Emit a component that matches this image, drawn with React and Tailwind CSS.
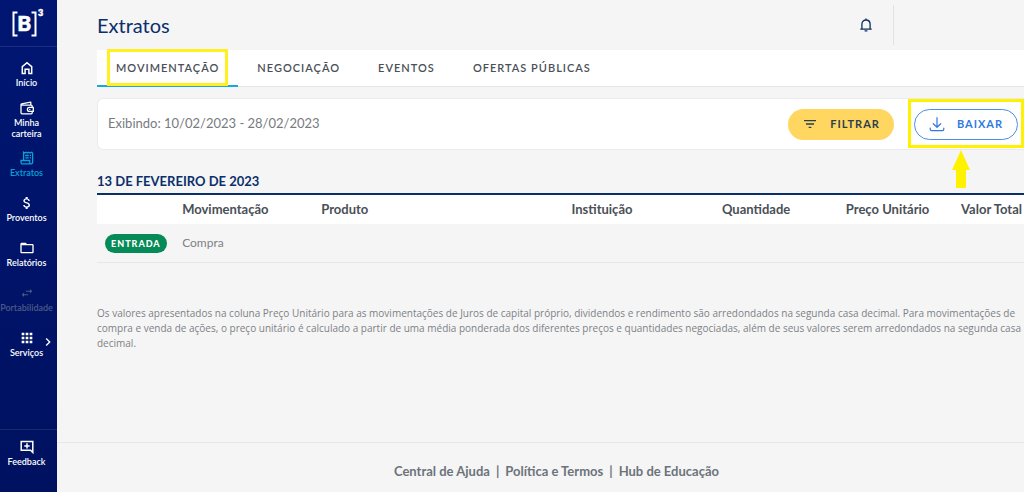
import { useState } from 'react'
import { MdApps, MdAttachMoney, MdFilterList, MdSwapHoriz, MdFolderOpen, MdChevronRight } from 'react-icons/md'

const HomeIcon = () => (
  <svg viewBox="0 0 14 14" className="size-[14px]" fill="none" stroke="currentColor" strokeWidth="1.5">
    <path d="M2.3 12.5V5.6L7 1.7l4.7 3.9v6.9H8.9V8.3H5.1v4.2z" />
  </svg>
)

const WalletIcon = () => (
  <svg viewBox="0 0 14 14" className="size-[14px]" fill="none" stroke="currentColor" strokeWidth="1.3" strokeLinejoin="round" strokeLinecap="round">
    <path d="M1 4.4v7.4c0 .6.4 1 1 1h9.2c.6 0 1-.4 1-1v-1.4M12.2 6.4V5.2c0-.6-.4-1-1-1H1.6c-.8 0-.8-1.2 0-1.4L10.8 1.2v3" />
    <path d="M13.3 6.4H9.4a2 2 0 0 0 0 4h3.9z" />
    <path d="M9.7 8.4h.1" />
  </svg>
)

const ReceiptIcon = () => (
  <svg viewBox="0 0 14 14" className="size-[14px]" fill="none" stroke="currentColor" strokeWidth="1.3">
    <path d="M3.6 9.4V1.2l1.3.8 1.3-.8 1.3.8 1.3-.8 1.3.8 1.3-.8 1.2.8v9.2c0 1-.6 1.7-1.5 1.7H2.5c-.9 0-1.5-.7-1.5-1.6V9.5h8.7v1.7c0 1 .6 1.7 1.4 1.7" />
    <path d="M5.2 4.5h3.6M5.2 6.9h3.6M9.8 4.5H11M9.8 6.9H11" />
  </svg>
)

const FeedbackIcon = () => (
  <svg viewBox="0 0 14 14" className="size-[14px]" fill="none" stroke="currentColor" strokeWidth="1.5">
    <path d="M1.2 1.5h11.6v11l-2.2-2.2H1.2zM7 3.2v5.4M4.3 5.9h5.4" />
  </svg>
)

const BellIcon = () => (
  <svg viewBox="0 0 14 14" className="size-[14px]" fill="none" stroke="currentColor" strokeWidth="1.3">
    <path d="M1.3 11.2h11.4M2.9 11.2V6.3C2.9 3.8 4.6 2 7 2s4.1 1.8 4.1 4.3v4.9M7 .4V2M5.6 12.9h2.8" />
  </svg>
)

const DownloadIcon = () => (
  <svg viewBox="0 0 16 16" className="size-4" fill="none" stroke="currentColor" strokeWidth="1.2" strokeLinecap="round" strokeLinejoin="round">
    <path d="M8 1.5v9.7M4.3 7.7 8 11.3l3.7-3.6M1.2 12v1.3c0 .9.5 1.4 1.4 1.4h10.8c.9 0 1.4-.5 1.4-1.4V12" />
  </svg>
)

const Logo = () => (
  <svg viewBox="0 0 34 30" className="h-[30px] w-[34px] text-white" role="img" aria-label="B3">
    <path d="M7.5 4.5H3.5v23h4M21.5 4.5h4v23h-4" fill="none" stroke="currentColor" strokeWidth="2" />
    <text x="7.3" y="23" fontSize="21" fontWeight="900" fill="currentColor" stroke="currentColor" strokeWidth="0.6">B</text>
    <text x="28" y="8" fontSize="9" fontWeight="900" fill="currentColor" stroke="currentColor" strokeWidth="0.5">3</text>
  </svg>
)

const menu = [
  { label: 'Início', icon: <HomeIcon /> },
  { label: 'Minha carteira', icon: <WalletIcon /> },
  { label: 'Extratos', icon: <ReceiptIcon />, color: 'text-[#0aa0d8]' },
  { label: 'Proventos', icon: <MdAttachMoney className="size-4 -my-px" /> },
  { label: 'Relatórios', icon: <MdFolderOpen className="size-4 -my-px" /> },
  { label: 'Portabilidade', icon: <MdSwapHoriz className="size-[14px]" />, color: 'text-[#4c5a86]' },
  { label: 'Serviços', icon: <MdApps className="size-4 -my-px" />, more: true },
]

const tabs = ['MOVIMENTAÇÃO', 'NEGOCIAÇÃO', 'EVENTOS', 'OFERTAS PÚBLICAS']

function Sidebar() {
  return (
    <aside className="w-[57px] shrink-0 flex flex-col bg-linear-to-b from-[#001672] to-[#001160] text-white">
      <div className="h-[47px] pt-2 pl-[10px] border-b border-white/10">
        <Logo />
      </div>
      <nav className="pt-[5px] pr-1 flex flex-col">
        {menu.map((item) => (
          <a
            key={item.label}
            href="#"
            className={`relative h-[45px] flex flex-col items-center justify-center gap-[2px] text-[9px] leading-[11px] font-semibold text-center ${item.color || 'text-white'}`}
          >
            {item.icon}
            <span>{item.label === 'Minha carteira' ? <>Minha<br />carteira</> : item.label}</span>
            {item.more && <MdChevronRight className="absolute -right-[3px] top-3 size-4" />}
          </a>
        ))}
      </nav>
      <div className="mt-auto h-[63px] pt-[10px] pr-1 border-t border-white/10">
        <a href="#" className="flex flex-col items-center gap-[2px] text-[9px] leading-[11px] font-semibold">
          <FeedbackIcon />
          Feedback
        </a>
      </div>
    </aside>
  )
}

function App() {
  const [activeTab, setActiveTab] = useState('MOVIMENTAÇÃO')

  return (
    <div className="min-h-screen flex bg-[#f5f5f6] font-[Lato,sans-serif] text-[#495057]">
      <Sidebar />
      <div className="flex-1 min-w-0 flex flex-col">
        <header className="h-[50px] pl-10 flex items-center">
          <h1 className="text-xl text-[#0b2f6b]">Extratos</h1>
          <button aria-label="Notificações" className="ml-auto mr-5 text-[#0b2f5b]">
            <BellIcon />
          </button>
          <div className="h-10 w-[131px] border-l border-[#dde3e8]"></div>
        </header>

        <main className="pl-10">
          <div className="h-[37px] flex bg-white border-b border-gray-200">
            {tabs.map((tab) => (
              <button
                key={tab}
                onClick={() => setActiveTab(tab)}
                className={`relative h-[37px] px-[19px] pt-[2px] text-[11px] font-semibold tracking-[1px] border-b-2 ${activeTab === tab ? 'border-[#1ca7dc]' : 'border-transparent'}`}
              >
                {tab}
                {tab === 'MOVIMENTAÇÃO' && (
                  <span className="absolute inset-x-[10px] -top-px -bottom-px border-3 border-[#fff01e]"></span>
                )}
              </button>
            ))}
          </div>

          <section className="mt-[11px] h-[52px] pl-[10px] pr-[6px] flex items-center bg-white border border-r-0 border-[#ebebed] rounded-l-md">
            <p className="text-[13px] text-[#777b80]">Exibindo: 10/02/2023 - 28/02/2023</p>
            <button className="ml-auto h-[31px] px-[14px] flex items-center gap-3 rounded-full bg-[#ffd660] text-[11px] font-bold tracking-[1px] text-[#2c3e50]">
              <MdFilterList className="size-4" />
              FILTRAR
            </button>
            <div className="relative ml-5">
              <button className="h-[31px] px-[14px] flex items-center gap-3 rounded-full border border-[#4a90e8] text-[11px] font-bold tracking-[1px] text-[#2f7be0]">
                <DownloadIcon />
                BAIXAR
              </button>
              <span className="absolute -inset-x-[6px] -top-[10px] -bottom-2 border-3 border-[#fff200] pointer-events-none"></span>
              <svg viewBox="0 0 18 38" className="absolute left-[38px] top-[41px] w-[18px] h-[38px]" fill="#fff200">
                <path d="M9 0 18 20h-4v18H4V20H0z" />
              </svg>
            </div>
          </section>

          <h2 className="mt-[21px] h-[22px] text-[13px] leading-5 font-bold text-[#0b2f6b]">13 DE FEVEREIRO DE 2023</h2>
          <table className="w-full table-fixed border-t-2 border-[#0b2f6b] text-left text-[13px]">
            <thead>
              <tr className="h-[30px] bg-white whitespace-nowrap">
                <th className="w-[8%]"></th>
                <th className="w-[15%] pl-[11px] font-bold">Movimentação</th>
                <th className="w-[27%] pl-[11px] font-bold">Produto</th>
                <th className="w-[15%] pl-[11px] font-bold">Instituição</th>
                <th className="w-[10%] pr-[2px] text-right font-bold">Quantidade</th>
                <th className="w-[15%] pr-[2px] text-right font-bold">Preço Unitário</th>
                <th className="w-[10%] pr-[2px] text-right font-bold">Valor Total</th>
              </tr>
            </thead>
            <tbody>
              <tr className="h-[38px] border-b border-gray-200">
                <td className="pl-2">
                  <span className="inline-flex items-center h-[19px] px-[6px] rounded-full bg-[#068a57] text-[9px] font-black tracking-[1px] text-white">ENTRADA</span>
                </td>
                <td className="pl-[11px] text-xs text-[#7d8185]">Compra</td>
                <td></td>
                <td></td>
                <td></td>
                <td></td>
                <td></td>
              </tr>
            </tbody>
          </table>

          <p className="mt-[43px] font-['Open_Sans',sans-serif] text-[10px] leading-[15px] text-[#7d8185]">
            Os valores apresentados na coluna Preço Unitário para as movimentações de Juros de capital próprio, dividendos e rendimento são arredondados na segunda casa decimal. Para movimentações de compra e venda de ações, o preço unitário é calculado a partir de uma média ponderada dos diferentes preços e quantidades negociadas, além de seus valores serem arredondados na segunda casa decimal.
          </p>
        </main>

        <footer className="mt-auto h-[50px] pl-8 pt-2 flex items-center justify-center gap-[6px] border-t border-gray-200 text-[13px] font-bold text-[#6c737a]">
          <a href="#">Central de Ajuda</a>
          <span>|</span>
          <a href="#">Política e Termos</a>
          <span>|</span>
          <a href="#">Hub de Educação</a>
        </footer>
      </div>
    </div>
  )
}

export default App
